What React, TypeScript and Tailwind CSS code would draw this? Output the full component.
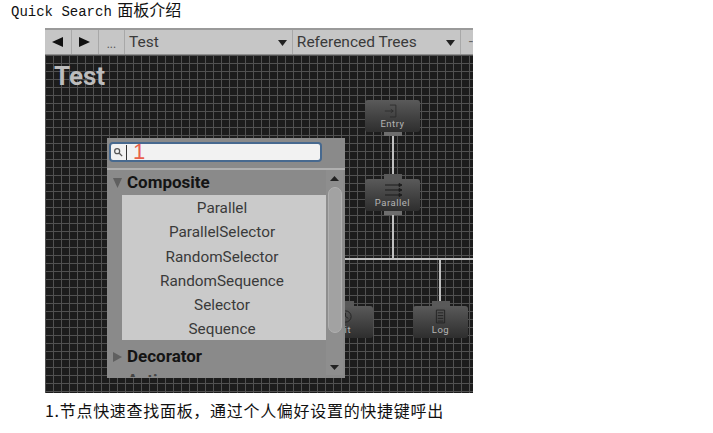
const sans = "font-['Roboto','Inter',sans-serif]";

function Tri({ dir, className }: { dir: "left" | "right" | "down" | "up"; className: string }) {
  const pts = { left: "10,0 10,10 0,5", right: "0,0 0,10 10,5", down: "0,0 10,0 5,10", up: "5,0 10,10 0,10" }[dir];
  return (
    <svg viewBox="0 0 10 10" preserveAspectRatio="none" className={className}>
      <polygon points={pts} fill="currentColor" />
    </svg>
  );
}

function Node({ label, x, y, w, icon, top = true, bottom = false }: { label: string; x: number; y: number; w: number; icon: React.ReactNode; top?: boolean; bottom?: boolean }) {
  return (
    <div className="absolute flex flex-col items-center" style={{ left: x, top: y, width: w }}>
      {top && <div className="w-[18px] h-[5px] bg-[#595959]" />}
      <div className="w-full h-[32px] rounded-[3px] bg-linear-to-b from-[#5a5a5a] to-[#2e2e2e] flex flex-col items-center justify-end pb-[3px] text-[#b4b4b4] text-[9.500px] leading-[11px] tracking-[0.500px] font-['Roboto',sans-serif]">
        {icon}
        <span>{label}</span>
      </div>
      {bottom && <div className="w-[18px] h-[4px] bg-[#6e6e6e]" />}
    </div>
  );
}

const items = ["Parallel", "ParallelSelector", "RandomSelector", "RandomSequence", "Selector", "Sequence"];

export default function App() {
  return (
    <div className="w-[713px] h-[433px] bg-white relative overflow-hidden font-['Liberation_Mono','Noto_Sans_CJK_SC',monospace]">
      <div className="h-[28px] pl-[11px] text-[14px] leading-[19px] text-[#111]">
        Quick Search <span className="text-[16px] font-['Noto_Sans_CJK_SC',sans-serif] -ml-[3px]">面板介绍</span>
      </div>
      <div className="ml-[45px] w-[428px]">
        <div className={`h-[27px] bg-[#c6c6c6] border-t-2 border-b border-t-[#9a9a9a] border-b-[#8e8e8e] flex items-stretch text-[15.500px] text-[#3a3a3a] overflow-hidden ${sans}`}>
          <div className="w-[27px] flex items-center justify-center border-r border-[#a8a8a8]"><Tri dir="left" className="w-[11px] h-[10px] text-[#111]" /></div>
          <div className="w-[27px] flex items-center justify-center border-r border-[#a8a8a8]"><Tri dir="right" className="w-[11px] h-[10px] text-[#111]" /></div>
          <div className="w-[26px] flex items-center justify-center border-r border-[#a8a8a8] text-[12px] text-[#555] pt-[3px]">...</div>
          <div className="w-[168px] flex items-center justify-between pl-[4px] pr-[5px] pt-[2px] border-r border-[#a8a8a8]">
            <span>Test</span><Tri dir="down" className="w-[9px] h-[6px] text-[#222]" />
          </div>
          <div className="w-[168px] flex items-center justify-between pl-[4px] pr-[5px] pt-[2px] border-r border-[#a8a8a8]">
            <span>Referenced Trees</span><Tri dir="down" className="w-[9px] h-[6px] text-[#222]" />
          </div>
          <div className="flex-1 flex items-center pl-[8px] text-[#666]">-</div>
        </div>
        <div className="relative h-[338px] overflow-hidden bg-[#1c1c1c] bg-[linear-gradient(#515151_1px,transparent_1px),linear-gradient(90deg,#515151_1px,transparent_1px)] bg-size-[8px_8px]">
          <div className={`absolute left-[9px] top-[6px] text-[26px] leading-[30px] font-bold text-[#bcbcbc] ${sans}`}>Test</div>

          <div className="absolute left-[347px] top-[77px] w-[2px] h-[47px] bg-[#c0c0c0]" />
          <div className="absolute left-[347px] top-[160px] w-[2px] h-[44px] bg-[#c0c0c0]" />
          <div className="absolute left-[300px] top-[203px] w-[128px] h-[2px] bg-[#c0c0c0]" />
          <div className="absolute left-[394px] top-[203px] w-[2px] h-[44px] bg-[#c0c0c0]" />

          <Node label="Entry" x={320} y={45} w={55} top={false} bottom
            icon={<svg viewBox="0 0 20 16" className="w-[17px] h-[14px] text-[#2a2a2a]" fill="none" stroke="currentColor"><path d="M7 1h7v14H7M1 8h9M8 6l3 2-3 2" /></svg>} />
          <Node label="Parallel" x={320} y={119} w={55} bottom
            icon={<svg viewBox="0 0 20 14" className="w-[20px] h-[14px] text-[#1c1c1c]" fill="none" stroke="currentColor"><path d="M2 2h14M2 7h14M2 12h14" /><path d="M16 0.500l3 1.500-3 1.500zM16 5.500l3 1.500-3 1.500zM16 10.500l3 1.500-3 1.500z" fill="currentColor" /></svg>} />
          <Node label="ait" x={272} y={246} w={56}
            icon={<svg viewBox="0 0 16 16" className="w-[15px] h-[15px] text-[#222]" fill="none" stroke="currentColor"><circle cx="8" cy="8" r="6" /><path d="M8 4v4l3 2" /></svg>} />
          <Node label="Log" x={368} y={246} w={55}
            icon={<svg viewBox="0 0 12 16" className="w-[11px] h-[15px] text-[#222]" fill="none" stroke="currentColor"><path d="M1.500 1h9v14h-9zM3 4h6M3 7h6M3 10h6M3 13h6" /></svg>} />

          <div className={`absolute left-[62px] top-[83px] w-[238px] h-[240px] bg-[#8a8a8a] flex flex-col ${sans}`}>
            <div className="h-[32px] shrink-0 px-[2px] pt-[4px] border-b-2 border-[#b0b0b0]">
              <div className="w-[213px] h-[20px] rounded-[4px] border-2 border-[#47698f] bg-[#f2f2f2] flex items-center pl-[2px] gap-[3px]">
                <svg viewBox="0 0 12 12" className="w-[10px] h-[10px] text-[#555]" fill="none" stroke="currentColor" strokeWidth="1.500"><circle cx="5" cy="5" r="3" /><path d="M7.500 7.500L11 11" /></svg>
                <div className="w-px h-[15px] bg-[#333]" />
                <span className="ml-[3px] -mt-[1px] text-[22px] leading-[15px] text-[#e8604c] font-['Liberation_Sans',sans-serif]">1</span>
              </div>
            </div>
            <div className="flex-1 flex min-h-0">
              <div className="w-[219px] overflow-hidden">
                <div className="h-[25px] flex items-center pl-[6px] gap-[5px] text-[17px] font-bold text-[#141414]">
                  <Tri dir="down" className="w-[9px] h-[10px] text-[#606060]" /><span>Composite</span>
                </div>
                <div className="ml-[15px] h-[145px] bg-[#cacaca] flex flex-col items-center pt-[1px] pr-[4px] text-[15.300px] leading-[24.300px] text-[#3a3a3a]">
                  {items.map((t) => <div key={t}>{t}</div>)}
                </div>
                <div className="h-[34px] flex items-center pl-[6px] gap-[5px] text-[17px] font-bold text-[#141414]">
                  <Tri dir="right" className="w-[9px] h-[10px] text-[#606060]" /><span>Decorator</span>
                </div>
                <div className="h-[3px] overflow-hidden pl-[20px] text-[17px] leading-[24px] font-bold text-[#444]">
                  <div className="-mt-[6px]">Action</div>
                </div>
              </div>
              <div className="w-[17px] flex flex-col items-center bg-[#8e8e8e] mb-[3px]">
                <Tri dir="up" className="w-[9px] h-[5px] mt-[6px] text-[#222]" />
                <div className="w-[14px] h-[146px] mt-[6px] rounded-[7px] bg-[#a2a2a2] border border-[#b0b0b0]" />
                <div className="flex-1" />
                <Tri dir="down" className="w-[9px] h-[5px] mb-[5px] text-[#222]" />
              </div>
            </div>
          </div>
        </div>
      </div>
      <div className="pl-[45px] mt-[7px] text-[16px] leading-[20px] tracking-[0.700px] text-[#111] font-['Noto_Sans_CJK_SC',sans-serif]">1.节点快速查找面板，通过个人偏好设置的快捷键呼出</div>
    </div>
  );
}
